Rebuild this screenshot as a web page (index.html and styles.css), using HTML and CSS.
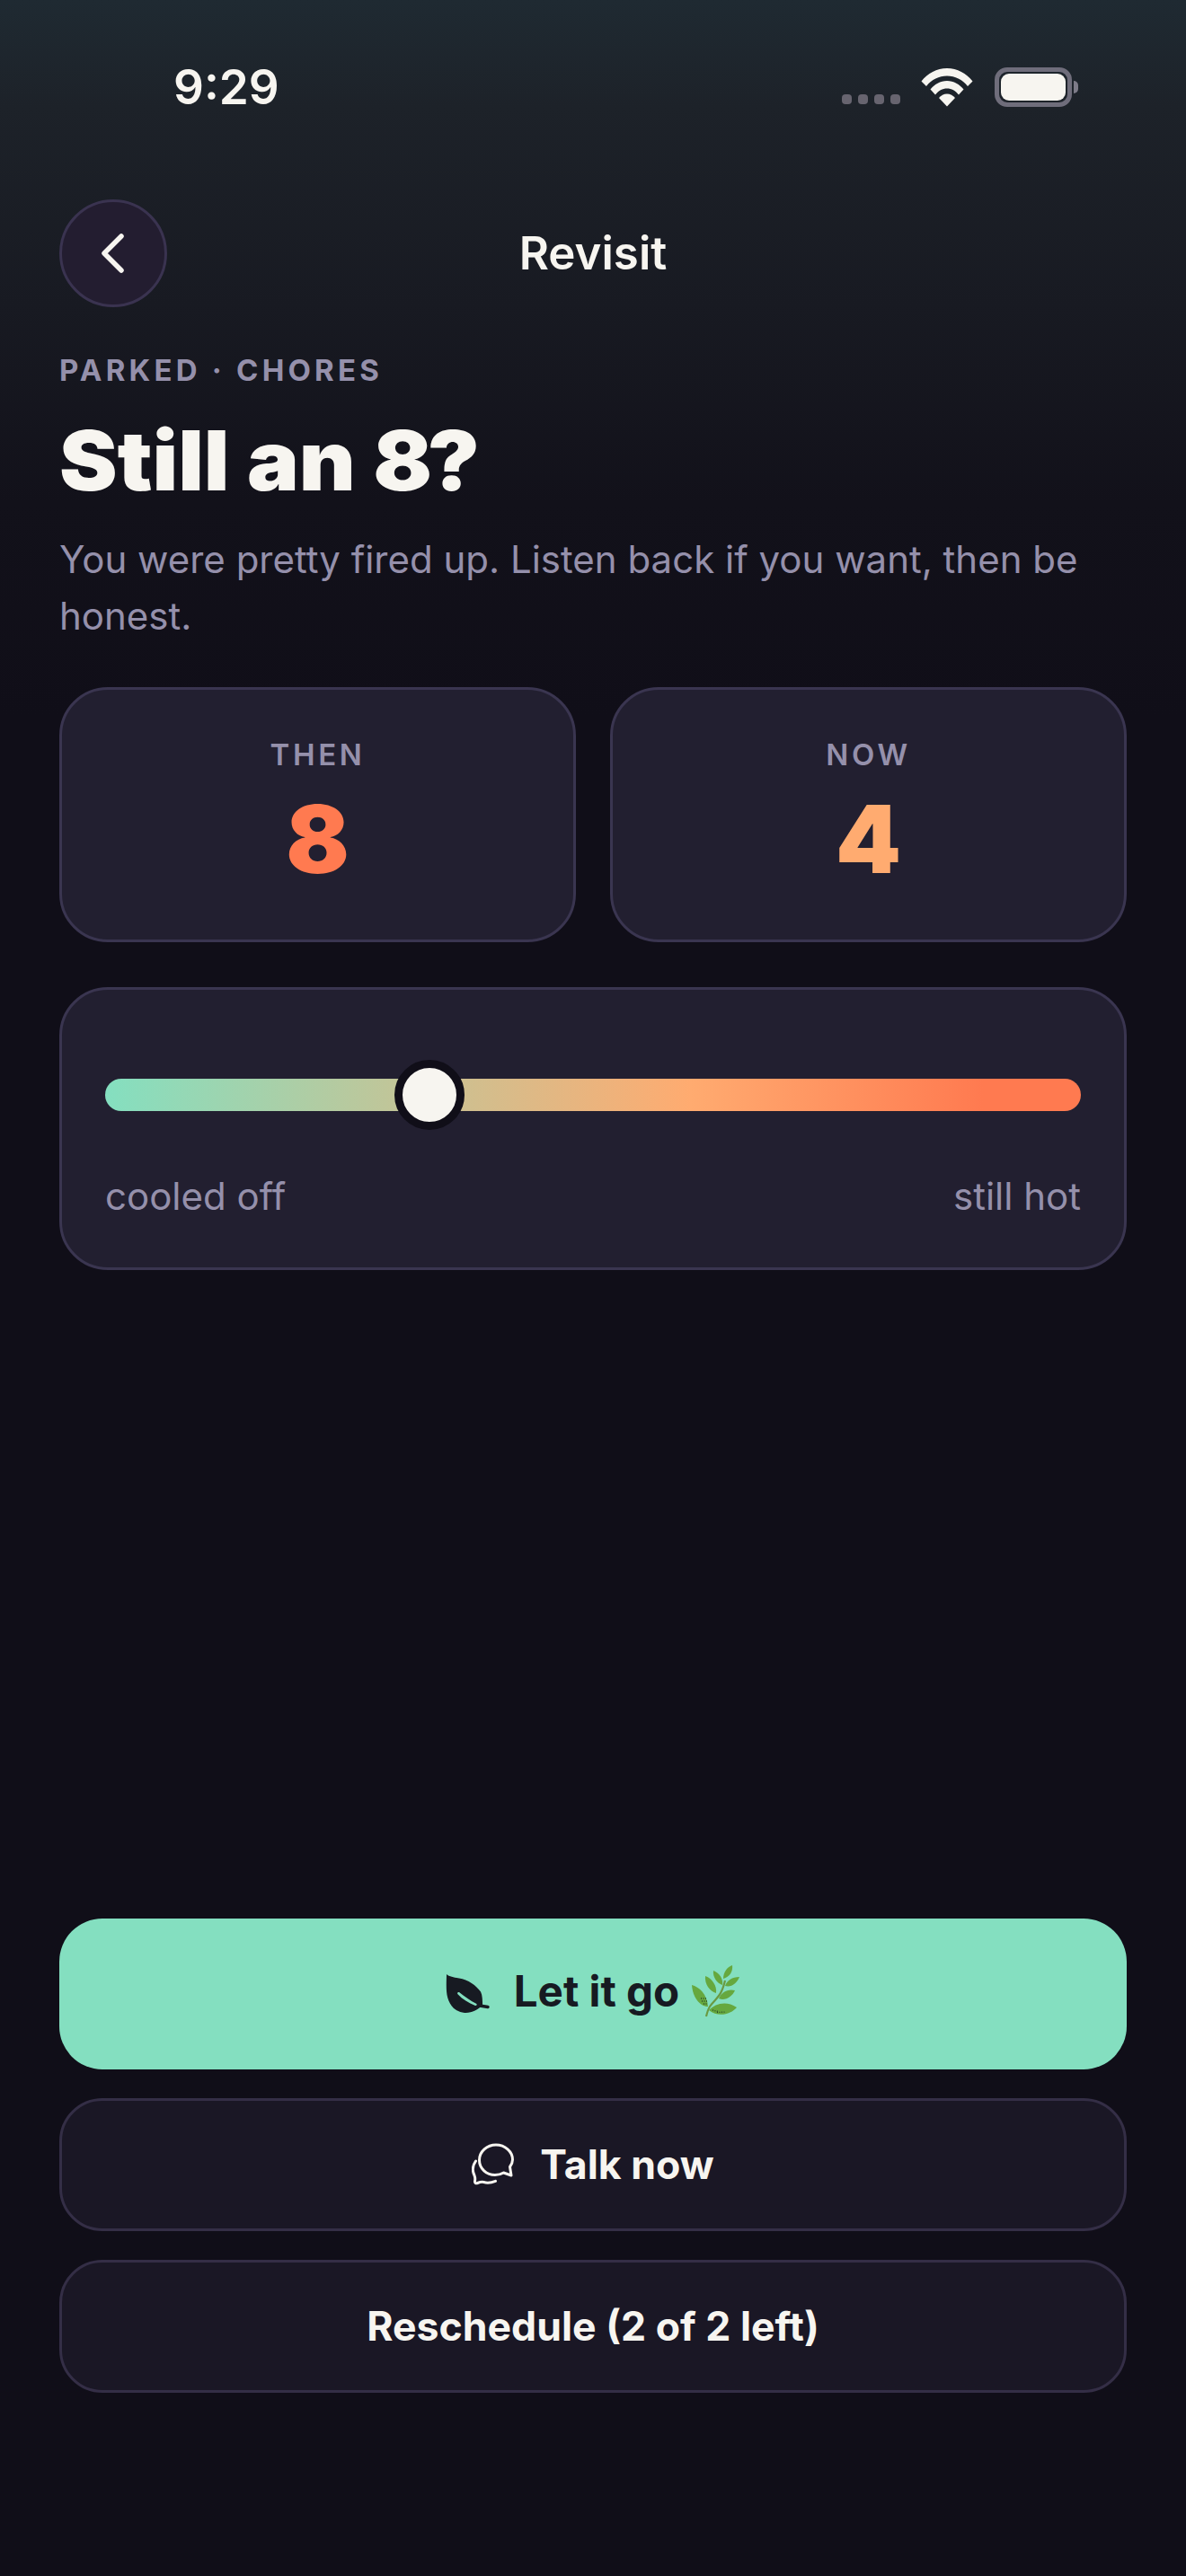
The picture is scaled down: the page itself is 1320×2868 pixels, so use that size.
FILE: index.html
```html
<!DOCTYPE html>
<html lang="en">
<head>
<meta charset="utf-8">
<title>Revisit</title>
<link rel="stylesheet" href="styles.css">
</head>
<body>
<div class="screen">
  <header class="status">
    <span class="clock">9:29</span>
    <div class="status-icons">
      <div class="signal"><i></i><i></i><i></i><i></i></div>
      <svg class="wifi" width="58" height="44" viewBox="0 0 58 44"><path fill="#f7f5f0" d="M0.5 15.500C7.500 6.500 17.500 1 29 1s21.500 5.500 28.500 14.500l-5.500 5.500C46 13.500 38 9.500 29 9.500S12 13.500 6 21z"/><path fill="#f7f5f0" d="M10.500 24.500C15 19 21.500 15 29 15s14 4 18.500 9.500l-5.500 6C38.500 26 34 23.500 29 23.500S19.500 26 16 30.500z"/><path fill="#f7f5f0" d="M20 34c2.200-2.600 5.400-4.500 9-4.500s6.800 1.900 9 4.500l-9 9.500z"/></svg>
      <div class="battery"><div class="battery-body"><div class="battery-fill"></div></div><div class="battery-cap"></div></div>
    </div>
  </header>

  <nav class="nav">
    <button class="back" aria-label="Back">
      <svg width="40" height="48" viewBox="0 0 40 48"><path d="M29 5 10 24l19 19" fill="none" stroke="#f7f5f0" stroke-width="5.500" stroke-linecap="round" stroke-linejoin="round"/></svg>
    </button>
    <h2 class="nav-title">Revisit</h2>
  </nav>

  <main class="content">
    <div class="eyebrow">PARKED · CHORES</div>
    <h1 class="headline">Still an <span class="headline-num">8?</span></h1>
    <p class="lead">You were pretty fired up. Listen back if you want, then be honest.</p>

    <section class="scores">
      <div class="card score"><div class="score-label">THEN</div><div class="score-value hot">8</div></div>
      <div class="card score"><div class="score-label">NOW</div><div class="score-value warm">4</div></div>
    </section>

    <section class="card slider-card">
      <div class="track"><div class="thumb"></div></div>
      <div class="scale"><span>cooled off</span><span>still hot</span></div>
    </section>
  </main>

  <footer class="actions">
    <button class="btn primary">
      <svg class="leaf" width="50" height="46" viewBox="0 0 50 46"><path fill="#171a22" fill-rule="evenodd" d="M1 1c3 3 9 3.500 14 4.500 10 1.500 19 8 24 15 2 4 2 10 2 15-5 5-12 9-20 8.500C9 43 2 33 1 20 .5 13 1 6 1 1zM15 21c-1.500-.5-2.500 1-1.500 2.200 5 5.500 12 9.800 19.500 12.800 1.600.4 2.400-1.500 1-2.300C27 30.500 21 25.500 15 21z"/><path d="M38 36l9 1.500" stroke="#171a22" stroke-width="3.500" stroke-linecap="round"/></svg>
      <span class="primary-label">Let it go</span>
      <svg class="herb" width="54" height="58" viewBox="0 0 54 58"><path d="M16 57c1-4 2-8 4-11 4-6 10-10 13-17 2-4 3-8 4-12" fill="none" stroke="#6a9a42" stroke-width="2.200"/><path d="M0 22C8 24 17 32 18 46 9 46 1 36 0 22z" fill="#66a83e"/><path d="M19 50C26 43 38 39 50 47 44 54 30 59 19 50z" fill="#66a83e"/><path d="M15 12C23 15 28 23 27 31 20 29 14 21 15 12z" fill="#66a83e"/><path d="M30 37C33 30 40 26 48 28 45 35 37 40 30 37z" fill="#66a83e"/><path d="M24 6C31 9 35 15 34 22 28 20 23 13 24 6z" fill="#66a83e"/><path d="M37 23C39 17 45 13 53 13 50 20 44 25 37 23z" fill="#66a83e"/><path d="M35 15C35 8 39 2 45 0 46 7 42 13 35 15z" fill="#66a83e"/><path d="M10 37h6M11 40h6M13 43h4M23 50l6 1.500M28 52.500l10-.5" stroke="#2c4a2a" stroke-width="1.300" stroke-dasharray="1 1.500" fill="none"/></svg>
    </button>
    <button class="btn ghost">
      <svg class="chat" width="48" height="48" viewBox="0 0 48 48"><path d="M27 2C17 2 8.500 9.500 8.500 19 8.500 28.500 16.500 35.500 26 35.500c3.500 0 7-1 9.500-2.500l8.500 3-1.500-9.500c1.800-2.500 3-5.500 3-8C45.500 9.500 37 2 27 2z" fill="none" stroke="#f7f5f0" stroke-width="3" stroke-linejoin="round"/><path d="M4.500 20C1 25 .5 31 3 36c.8 2 1 4 .5 6.500-.2 1.800 1 2.800 3 2 2.500-1 4.500-1.500 7-1 3 1 8 .8 13-1.200" fill="none" stroke="#f7f5f0" stroke-width="3" stroke-linecap="round" stroke-linejoin="round"/></svg>
      <span>Talk now</span>
    </button>
    <button class="btn ghost">Reschedule (2 of 2 left)</button>
  </footer>
</div>
</body>
</html>
```

FILE: styles.css
```css
* { box-sizing: border-box; margin: 0; padding: 0; }
html, body { width: 1320px; height: 2868px; background: #100e18; }
body { font-family: Inter, "Liberation Sans", sans-serif; color: #f7f5f0; overflow: hidden; }
.screen {
  width: 1320px; height: 2868px; display: flex; flex-direction: column;
  background: linear-gradient(180deg, #1f2a32 0, #1d2229 120px, #181a22 340px, #12111a 560px, #100e18 800px);
}
.status {
  height: 150px; flex: none; display: flex; justify-content: space-between; align-items: flex-start;
  padding: 67px 120px 0 193px;
}
.clock { font-size: 53px; line-height: 60px; font-weight: 600; }
.status-icons { display: flex; align-items: flex-start; padding-top: 8px; }
.signal { display: flex; gap: 7px; margin-top: 30px; margin-right: 23px; }
.signal i { width: 11px; height: 11px; border-radius: 4px; background: #67646f; }
.wifi { margin-right: 24px; }
.battery { display: flex; align-items: center; }
.battery-body { width: 86px; height: 44px; border: 5px solid #6f6d7b; border-radius: 14px; padding: 2px; }
.battery-fill { width: 100%; height: 100%; background: #f7f5f0; border-radius: 9px; }
.battery-cap { width: 5px; height: 14px; background: #7d7b88; border-radius: 0 6px 6px 0; margin-left: 2px; }

.nav { height: 120px; margin: 72px 66px 0; flex: none; position: relative; display: flex; align-items: center; justify-content: center; }
.back {
  position: absolute; left: 0; top: 0; width: 120px; height: 120px; border-radius: 50%;
  background: #231d30; border: 3px solid #3a3350; display: flex; align-items: center; justify-content: center;
}
.nav-title { font-size: 51px; font-weight: 600; line-height: 60px; }

.content { padding: 0 66px; flex: none; }
.eyebrow { margin-top: 50px; font-size: 33px; line-height: 40px; font-weight: 700; letter-spacing: 4.200px; color: #9590ab; }
.headline { margin-top: 29px; font-size: 92px; line-height: 104px; font-weight: 900; letter-spacing: 0; transform: scaleX(1.055); transform-origin: left center; }
.headline-num { letter-spacing: -5px; }
.lead { margin-top: 27px; font-size: 42px; line-height: 62.500px; color: #9590ab; font-weight: 400; width: 1188px; }

.card { background: #221f30; border: 3px solid #3a3550; border-radius: 54px; }
.scores { margin-top: 48px; display: grid; grid-template-columns: 1fr 1fr; gap: 38px; }
.score { height: 284px; display: flex; flex-direction: column; align-items: center; padding-top: 52px; }
.score-label { font-size: 33px; line-height: 40px; font-weight: 600; letter-spacing: 3.600px; color: #9590ab; }
.score-value { margin-top: 18px; font-size: 104px; line-height: 112px; font-weight: 900; }
.hot { color: #ff7a50; }
.warm { color: #ffab70; }

.slider-card { margin-top: 50px; height: 315px; padding: 99px 48px 0; }
.track { height: 36px; border-radius: 18px; position: relative; background: linear-gradient(90deg, #84dfc0 0, #ffab70 60%, #ff7a50 90%); }
.thumb { position: absolute; left: 322px; top: -21px; width: 78px; height: 78px; border-radius: 50%; background: #f7f5f0; border: 9px solid #100e18; }
.scale { margin-top: 70px; display: flex; justify-content: space-between; font-size: 42px; line-height: 50px; color: #9590ab; }

.actions { margin-top: auto; padding: 0 66px 204px; display: flex; flex-direction: column; gap: 32px; }
.btn {
  font-family: inherit; font-size: 44.600px; font-weight: 700; display: flex; align-items: center; justify-content: center;
  width: 100%; height: 148px; border-radius: 48px; border: 3px solid #342e46; background: #1a1725; color: #f7f5f0;
}
.primary { height: 168px; font-size: 47.500px; background: #84dfc0; border: none; color: #171a22; }
.primary-label { margin-bottom: 8px; }
.leaf { margin-right: 26px; }
.herb { margin-left: 14px; margin-bottom: 6px; }
.chat { margin-right: 28px; }
```
